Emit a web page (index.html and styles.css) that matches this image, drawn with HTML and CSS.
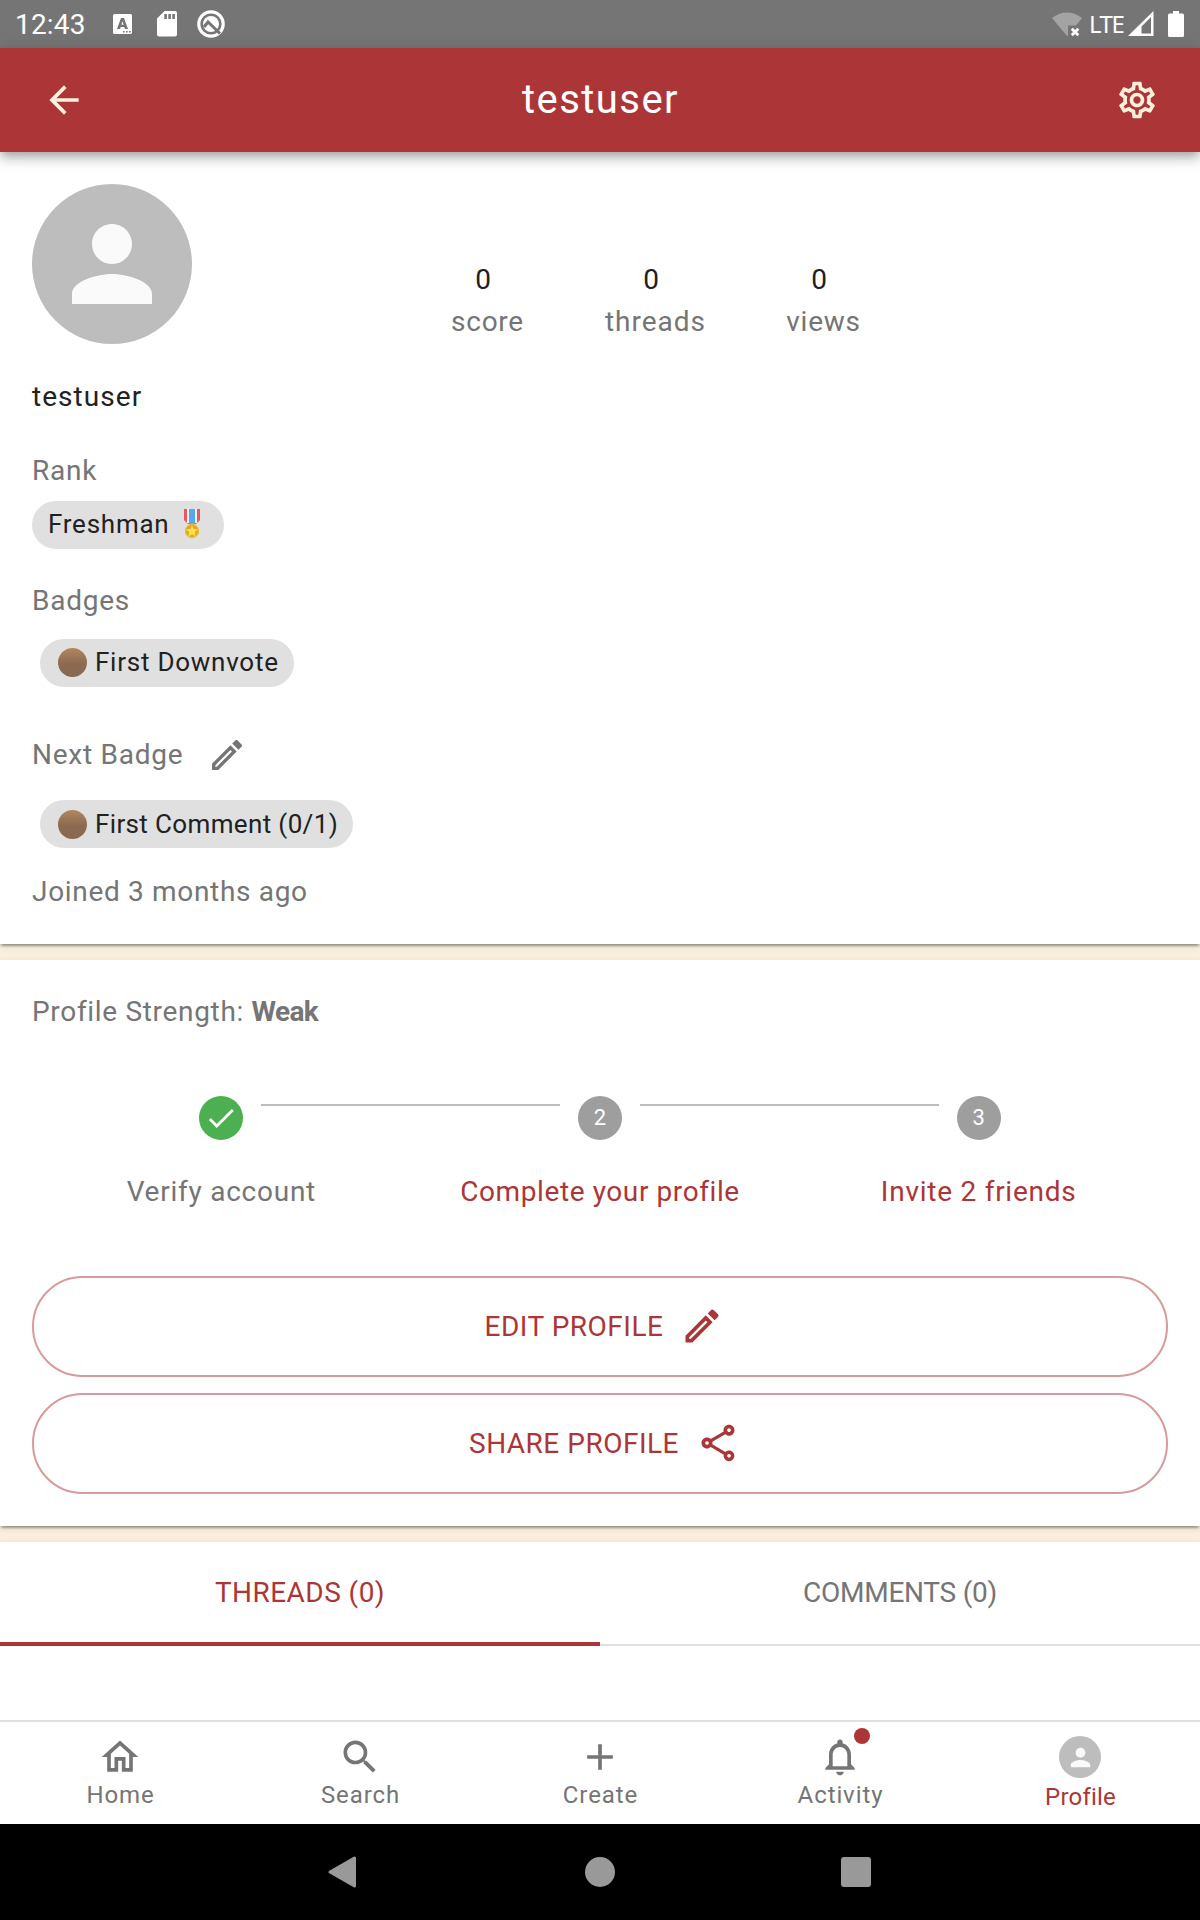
FILE: index.html
```html
<!DOCTYPE html>
<html lang="en">
<head>
<meta charset="utf-8">
<title>testuser</title>
<link rel="stylesheet" href="styles.css">
</head>
<body>
<div class="screen">
  <div class="status-bar">
    <span class="clock">12:43</span>
    <svg class="status-keyboard" width="20" height="22" viewBox="0 0 20 22"><path fill="#fff" fill-rule="evenodd" d="M1.5 1h16a1.5 1.5 0 0 1 1.500 1.500v17a1.500 1.500 0 0 1-1.500 1.500h-16a1.500 1.500 0 0 1-1.500-1.500v-17A1.500 1.500 0 0 1 1.500 1zM8 5h3l4 11h-3l-.7-2H7.700l-.7 2H4zm1.500 3.200-1.100 3.600h2.200zM10 18v1.600h1.600V18zm3 0v1.600h1.600V18zm3 0v1.600h1.600V18z"/></svg>
    <svg class="status-sd" width="20" height="26" viewBox="0 0 20 26"><path fill="#fff" fill-rule="evenodd" d="M7.500 0H18a2 2 0 0 1 2 2v21.500a2 2 0 0 1-2 2H2a2 2 0 0 1-2-2V7.500zM7.300 3v5h2.600V3zm4 0v5h2.600V3zm4 0v5h2.600V3z"/></svg>
    <svg class="status-search" width="28" height="28" viewBox="0 0 28 28" fill="none"><circle cx="14" cy="14" r="12.200" stroke="#fff" stroke-width="3.200"/><circle cx="14" cy="14" r="8" fill="#fff"/><path d="M7 17l4-5 12 11.500" stroke="#757575" stroke-width="3"/></svg>
    <span class="spacer"></span>
    <svg width="30" height="26" viewBox="0 0 30 26"><path fill="#a3a3a3" d="M0 7a23 23 0 0 1 30 0l-6 7.500h-8V25h-1z"/><path d="M19.800 17.800l6.500 6.500m0-6.500l-6.500 6.500" stroke="#fff" stroke-width="2.800"/></svg>
    <span class="network">LTE</span>
    <svg class="status-signal" width="26" height="26" viewBox="0 0 26 26"><path fill="#fff" fill-rule="evenodd" d="M25.500 0v25H0zM23 6l-9.500 9.500v7H23z"/></svg>
    <svg width="16" height="26" viewBox="0 0 16 26"><path fill="#fff" d="M5 0h6v2.500h3.500A1.500 1.500 0 0 1 16 4v20.500a1.500 1.500 0 0 1-1.500 1.500h-13A1.500 1.500 0 0 1 0 24.500V4a1.500 1.500 0 0 1 1.500-1.500H5z"/></svg>
  </div>

  <header class="app-bar">
    <svg class="icon" viewBox="0 0 24 24"><path d="M20 11H7.830l5.590-5.590L12 4l-8 8 8 8 1.410-1.410L7.830 13H20v-2z"/></svg>
    <h1 class="title">testuser</h1>
    <svg class="icon" viewBox="0 0 24 24"><path d="M19.430 12.980c.04-.32.07-.64.07-.98 0-.34-.03-.66-.07-.98l2.110-1.650c.19-.15.24-.42.12-.64l-2-3.460c-.09-.16-.26-.25-.44-.25-.06 0-.12.01-.17.03l-2.490 1c-.52-.4-1.080-.73-1.690-.98l-.38-2.650C14.460 2.180 14.250 2 14 2h-4c-.25 0-.46.18-.49.42l-.38 2.650c-.61.25-1.170.59-1.690.98l-2.490-1c-.06-.02-.12-.03-.18-.03-.17 0-.34.09-.43.25l-2 3.460c-.13.22-.07.49.12.64l2.110 1.650c-.04.32-.07.65-.07.98 0 .33.03.66.07.98l-2.110 1.650c-.19.15-.24.42-.12.64l2 3.460c.09.16.26.25.44.25.06 0 .12-.01.17-.03l2.490-1c.52.4 1.080.73 1.690.98l.38 2.650c.03.24.24.42.49.42h4c.25 0 .46-.18.49-.42l.38-2.650c.61-.25 1.170-.59 1.690-.98l2.490 1c.06.02.12.03.18.03.17 0 .34-.09.43-.25l2-3.460c.12-.22.07-.49-.12-.64l-2.110-1.650zm-1.980-1.710c.04.31.05.52.05.73 0 .21-.02.43-.05.73l-.14 1.130.89.7 1.080.84-.7 1.210-1.270-.51-1.040-.42-.9.68c-.43.32-.84.56-1.250.73l-1.060.43-.16 1.130-.2 1.350h-1.400l-.19-1.350-.16-1.130-1.060-.43c-.43-.18-.83-.41-1.230-.71l-.91-.7-1.060.43-1.270.51-.7-1.210 1.080-.84.89-.7-.14-1.130c-.03-.31-.05-.54-.05-.74s.02-.43.05-.73l.14-1.130-.89-.7-1.080-.84.7-1.210 1.270.51 1.040.42.9-.68c.43-.32.84-.56 1.250-.73l1.060-.43.16-1.130.2-1.350h1.390l.19 1.350.16 1.130 1.060.43c.43.18.83.41 1.230.71l.91.7 1.060-.43 1.270-.51.7 1.210-1.070.85-.89.7.14 1.130zM12 8c-2.210 0-4 1.790-4 4s1.790 4 4 4 4-1.790 4-4-1.790-4-4-4zm0 6c-1.100 0-2-.9-2-2s.9-2 2-2 2 .9 2 2-.9 2-2 2z"/></svg>
  </header>

  <section class="card profile">
    <div class="profile-head">
      <div class="avatar"><svg width="120" height="120" viewBox="0 0 24 24"><path d="M12 12c2.210 0 4-1.790 4-4s-1.790-4-4-4-4 1.790-4 4 1.790 4 4 4zm0 2c-2.670 0-8 1.340-8 4v2h16v-2c0-2.660-5.330-4-8-4z"/></svg></div>
      <div class="stats">
        <div class="stat"><span class="stat-value">0</span><span class="stat-label score">score</span></div>
        <div class="stat"><span class="stat-value">0</span><span class="stat-label threads">threads</span></div>
        <div class="stat"><span class="stat-value">0</span><span class="stat-label">views</span></div>
      </div>
    </div>
    <p class="username">testuser</p>
    <p class="rank-label">Rank</p>
    <div class="chip rank-chip">Freshman
      <svg class="medal" width="16" height="30" viewBox="0 0 16 30"><path fill="#e4595c" d="M0 0h16v11l-4 4H4l-4-4z"/><path fill="#f5f1f1" d="M3 0h10v14H3z"/><path fill="#55a9ed" d="M5 0h6v15H5z"/><circle cx="8" cy="22" r="7.200" fill="#ecb92f"/><circle cx="8" cy="22" r="5.700" fill="#dfa629"/><path fill="#ffe34d" d="M8 16.500l1.700 3.600 3.900.5-2.900 2.700.8 3.900L8 25.300l-3.500 1.900.8-3.900-2.900-2.700 3.900-.5z"/></svg>
    </div>
    <p class="badges-label">Badges</p>
    <div class="chip badge-chip first"><i class="bronze"></i>First Downvote</div>
    <div class="next-row">
      <span class="next-label">Next Badge</span>
      <svg class="icon edit-small" viewBox="0 0 24 24"><path d="M14.060 9.020l.92.92L5.920 19H5v-.92l9.060-9.060M17.660 3c-.25 0-.51.1-.7.29l-1.830 1.830 3.750 3.750 1.830-1.830c.39-.39.39-1.020 0-1.410l-2.340-2.340c-.2-.2-.45-.29-.71-.29zm-3.600 3.190L3 17.250V21h3.750L17.810 9.940l-3.750-3.750z"/></svg>
    </div>
    <div class="chip badge-chip next"><i class="bronze"></i>First Comment (0/1)</div>
    <p class="joined">Joined 3 months ago</p>
  </section>

  <section class="card strength">
    <p class="strength-label">Profile Strength: <strong>Weak</strong></p>
    <div class="step-track">
      <span class="step-dot done"><svg viewBox="0 0 24 24"><path d="M9 16.170L4.830 12l-1.420 1.410L9 19 21 7l-1.410-1.410z"/></svg></span>
      <span class="connector"></span>
      <span class="step-dot">2</span>
      <span class="connector"></span>
      <span class="step-dot">3</span>
    </div>
    <div class="step-labels">
      <span class="step-done">Verify account</span>
      <a class="complete">Complete your profile</a>
      <a>Invite 2 friends</a>
    </div>
    <div class="actions">
      <button class="pill">EDIT PROFILE
        <svg class="icon" viewBox="0 0 24 24"><path d="M14.060 9.020l.92.92L5.920 19H5v-.92l9.060-9.060M17.660 3c-.25 0-.51.1-.7.29l-1.830 1.830 3.750 3.750 1.830-1.830c.39-.39.39-1.020 0-1.410l-2.340-2.340c-.2-.2-.45-.29-.71-.29zm-3.600 3.190L3 17.250V21h3.750L17.810 9.940l-3.750-3.750z"/></svg>
      </button>
      <button class="pill">SHARE PROFILE
        <svg class="icon" viewBox="0 0 24 24"><path d="M18 16.080c-.76 0-1.440.3-1.960.77L8.910 12.700c.05-.23.09-.46.09-.7s-.04-.47-.09-.7l7.050-4.110c.54.5 1.250.81 2.040.81 1.660 0 3-1.340 3-3s-1.340-3-3-3-3 1.340-3 3c0 .24.04.47.09.7L8.040 9.810C7.500 9.310 6.790 9 6 9c-1.660 0-3 1.340-3 3s1.340 3 3 3c.79 0 1.500-.31 2.040-.81l7.120 4.160c-.05.21-.08.43-.08.65 0 1.610 1.310 2.920 2.920 2.920s2.920-1.310 2.920-2.920-1.310-2.920-2.920-2.920zM18 4c.55 0 1 .45 1 1s-.45 1-1 1-1-.45-1-1 .45-1 1-1zM6 13c-.55 0-1-.45-1-1s.45-1 1-1 1 .45 1 1-.45 1-1 1zm12 7.020c-.55 0-1-.45-1-1s.45-1 1-1 1 .45 1 1-.45 1-1 1z"/></svg>
      </button>
    </div>
  </section>

  <section class="card feed">
    <div class="tabs">
      <span class="tab active">THREADS (0)</span>
      <span class="tab comments">COMMENTS (0)</span>
    </div>
  </section>

  <nav class="bottom-nav">
    <a class="nav-item"><svg class="icon" viewBox="0 0 24 24"><path d="M12 5.690l5 4.500V18h-2v-6H9v6H7v-7.810l5-4.500M12 3L2 12h3v8h6v-6h2v6h6v-8h3L12 3z"/></svg><span class="nav-label">Home</span></a>
    <a class="nav-item"><svg class="icon" viewBox="0 0 24 24"><path d="M15.500 14h-.79l-.28-.27C15.410 12.590 16 11.110 16 9.500 16 5.910 13.090 3 9.500 3S3 5.910 3 9.500 5.910 16 9.500 16c1.610 0 3.090-.59 4.230-1.570l.27.28v.79l5 4.990L20.490 19l-4.990-5zm-6 0C7.010 14 5 11.990 5 9.500S7.010 5 9.500 5 14 7.010 14 9.500 11.990 14 9.500 14z"/></svg><span class="nav-label">Search</span></a>
    <a class="nav-item"><svg class="icon" viewBox="0 0 24 24"><path d="M19 13h-6v6h-2v-6H5v-2h6V5h2v6h6v2z"/></svg><span class="nav-label">Create</span></a>
    <a class="nav-item"><span class="bell"><svg class="icon" viewBox="0 0 24 24"><path d="M12 22c1.100 0 2-.9 2-2h-4c0 1.100.89 2 2 2zm6-6v-5c0-3.070-1.640-5.640-4.500-6.320V4c0-.83-.67-1.500-1.500-1.500s-1.500.67-1.500 1.500v.68C7.630 5.360 6 7.920 6 11v5l-2 2v1h16v-1l-2-2zm-2 1H8v-6c0-2.480 1.510-4.500 4-4.500s4 2.020 4 4.500v6z"/></svg><i class="dot"></i></span><span class="nav-label">Activity</span></a>
    <a class="nav-item current"><span class="avatar mini"><svg width="29" height="29" viewBox="0 0 24 24"><path d="M12 12c2.210 0 4-1.790 4-4s-1.790-4-4-4-4 1.790-4 4 1.790 4 4 4zm0 2c-2.670 0-8 1.340-8 4v2h16v-2c0-2.660-5.330-4-8-4z"/></svg></span><span class="nav-label">Profile</span></a>
  </nav>

  <div class="system-nav">
    <svg width="32" height="34" viewBox="0 0 32 34"><path d="M28.500 3v28L4 17z" fill="#999" stroke="#999" stroke-width="3" stroke-linejoin="round"/></svg>
    <span class="system-home"></span>
    <span class="system-recent"></span>
  </div>
</div>
</body>
</html>
```
FILE: styles.css
```css
* { box-sizing: border-box; }

body {
  margin: 0;
  background: #f9efdc;
  font-family: Roboto, "Liberation Sans", sans-serif;
  font-size: 28px;
  line-height: 42px;
  letter-spacing: 0.75px;
  color: #757575;
}

h1, p { margin: 0; font-weight: 400; }
svg { display: block; flex: none; }
.icon { width: 44px; height: 44px; fill: currentColor; }

.screen {
  display: flex;
  flex-direction: column;
  width: 1200px;
  height: 1920px;
  overflow: hidden;
}

/* system status bar */
.status-bar {
  display: flex;
  align-items: center;
  flex: none;
  height: 48px;
  padding: 0 16px 0 15px;
  background: #757575;
  color: #fff;
  letter-spacing: 0;
}
.clock { width: 98px; padding-top: 2px; letter-spacing: 0.2px; }
.status-sd { margin-left: 24px; }
.status-search { margin-left: 20px; }
.spacer { flex: 1; }
.network {
  width: 39px;
  margin-left: 7px;
  font-family: "Noto Sans", Roboto, sans-serif;
  font-size: 24px;
  letter-spacing: -1.5px;
}
.status-signal { margin-right: 14px; }

/* app bar */
.app-bar {
  position: relative;
  z-index: 2;
  display: flex;
  align-items: center;
  justify-content: space-between;
  flex: none;
  height: 104px;
  padding: 0 41px 0 42px;
  background: #ac3637;
  color: #fbf0dc;
  box-shadow: 0 4px 8px -2px rgba(0,0,0,.2), 0 8px 10px rgba(0,0,0,.14), 0 2px 20px rgba(0,0,0,.12);
}
.title {
  color: #fff;
  font-size: 40px;
  line-height: 56px;
  letter-spacing: 1.45px;
}

/* cards */
.card {
  flex: none;
  margin-bottom: 16px;
  padding: 0 32px;
  background: #fff;
  box-shadow: 0 4px 2px -2px rgba(0,0,0,.2), 0 2px 2px rgba(0,0,0,.14), 0 2px 6px rgba(0,0,0,.12);
}
.profile { height: 792px; padding-top: 32px; }
.profile-head { display: flex; height: 160px; }
.avatar {
  display: flex;
  align-items: center;
  justify-content: center;
  width: 160px;
  height: 160px;
  border-radius: 50%;
  background: #bdbdbd;
  fill: #fafafa;
}
.stats { display: flex; padding: 75px 0 0 211px; }
.stat { display: flex; flex-direction: column; align-items: center; width: 168px; }
.stat-value { color: #212121; padding-right: 8px; letter-spacing: 0; }
.stat-label { padding-left: 1px; }
.stat-label.threads { letter-spacing: 1px; }
.username { margin-top: 32px; color: #212121; letter-spacing: 1.05px; }
.rank-label { margin-top: 32px; }
.chip {
  display: flex;
  align-items: center;
  width: max-content;
  height: 48px;
  border-radius: 24px;
  background: #e0e0e0;
  color: #212121;
  font-size: 26px;
}
.rank-chip { width: 192px; margin-top: 9px; padding: 0 0 2px 16px; }
.medal { margin-left: 15px; }
.badges-label { margin-top: 31px; }
.badge-chip { margin-left: 8px; padding-left: 18px; }
.badge-chip.first { width: 254px; margin-top: 17px; padding-bottom: 2px; }
.badge-chip.next { width: 313px; margin-top: 26px; letter-spacing: 0.36px; }
.bronze {
  width: 29px;
  height: 29px;
  margin-right: 8px;
  border-radius: 50%;
  background: linear-gradient(#b0875f, #8c6a50 55%, #886850);
}
.next-row { display: flex; align-items: center; height: 40px; margin-top: 47px; }
.next-label { padding-top: 2px; }
.edit-small { width: 40px; height: 40px; margin: 2px 0 0 24px; }
.joined { margin-top: 23px; letter-spacing: 0.68px; }

/* profile strength */
.strength { height: 566px; padding-top: 31px; }
.strength-label { letter-spacing: 0.68px; }
.strength-label strong { letter-spacing: -0.7px; }
.step-track { display: flex; margin-top: 63px; padding: 0 167.33px; }
.step-dot {
  display: flex;
  align-items: center;
  justify-content: center;
  width: 44px;
  height: 44px;
  border-radius: 50%;
  background: #9e9e9e;
  color: #fff;
  font-size: 22px;
  letter-spacing: 0;
}
.step-dot.done { background: #4caf50; fill: #fff; }
.step-dot svg { width: 34px; height: 34px; }
.connector { flex: 1; height: 2px; margin: 8px 18px 0; background: #bdbdbd; }
.step-labels {
  display: grid;
  grid-template-columns: repeat(3, 1fr);
  margin-top: 31px;
  text-align: center;
  color: #ac3637;
}
.step-done { color: #757575; }
.complete { letter-spacing: 0.6px; }
.actions { display: grid; gap: 16px; margin-top: 63px; }
.pill {
  display: flex;
  align-items: center;
  justify-content: center;
  gap: 17px;
  height: 101px;
  padding: 0 0 0 9px;
  border: 2px solid #d79b9b;
  border-radius: 51px;
  background: transparent;
  color: #ac3637;
  font: inherit;
  letter-spacing: 0.5px;
}
.pill .icon { margin-bottom: 2px; }

/* thread / comment tabs */
.feed { height: 178px; margin: 0; padding: 0; }
.tabs { display: flex; height: 104px; border-bottom: 2px solid #e0e0e0; }
.tab { width: 600px; height: 104px; padding-top: 30px; text-align: center; letter-spacing: 0.45px; }
.tab.active { color: #ac3637; border-bottom: 4px solid #ac3637; }
.tab.comments { letter-spacing: -0.25px; }

/* bottom navigation */
.bottom-nav {
  position: relative;
  display: flex;
  flex: none;
  height: 104px;
  border-top: 2px solid #e0e0e0;
  background: #fff;
}
.nav-item {
  display: flex;
  flex-direction: column;
  align-items: center;
  width: 240px;
  padding-top: 13px;
  font-size: 24px;
  line-height: 28px;
  letter-spacing: 0.9px;
}
.nav-label { margin-top: 2px; padding-left: 1px; }
.bell { position: relative; }
.dot {
  position: absolute;
  top: -7px;
  right: -8px;
  width: 16px;
  height: 16px;
  border-radius: 50%;
  background: #ac3637;
}
.avatar.mini { width: 42px; height: 42px; margin: 1px 0 3px; }
.current { color: #ac3637; letter-spacing: 0.2px; }

/* system navigation */
.system-nav {
  display: flex;
  align-items: center;
  justify-content: space-between;
  flex: none;
  height: 96px;
  padding: 0 329px 0 326px;
  background: #000;
}
.system-home { width: 30px; height: 30px; border-radius: 50%; background: #999; }
.system-recent { width: 30px; height: 30px; border-radius: 3px; background: #999; }
```
